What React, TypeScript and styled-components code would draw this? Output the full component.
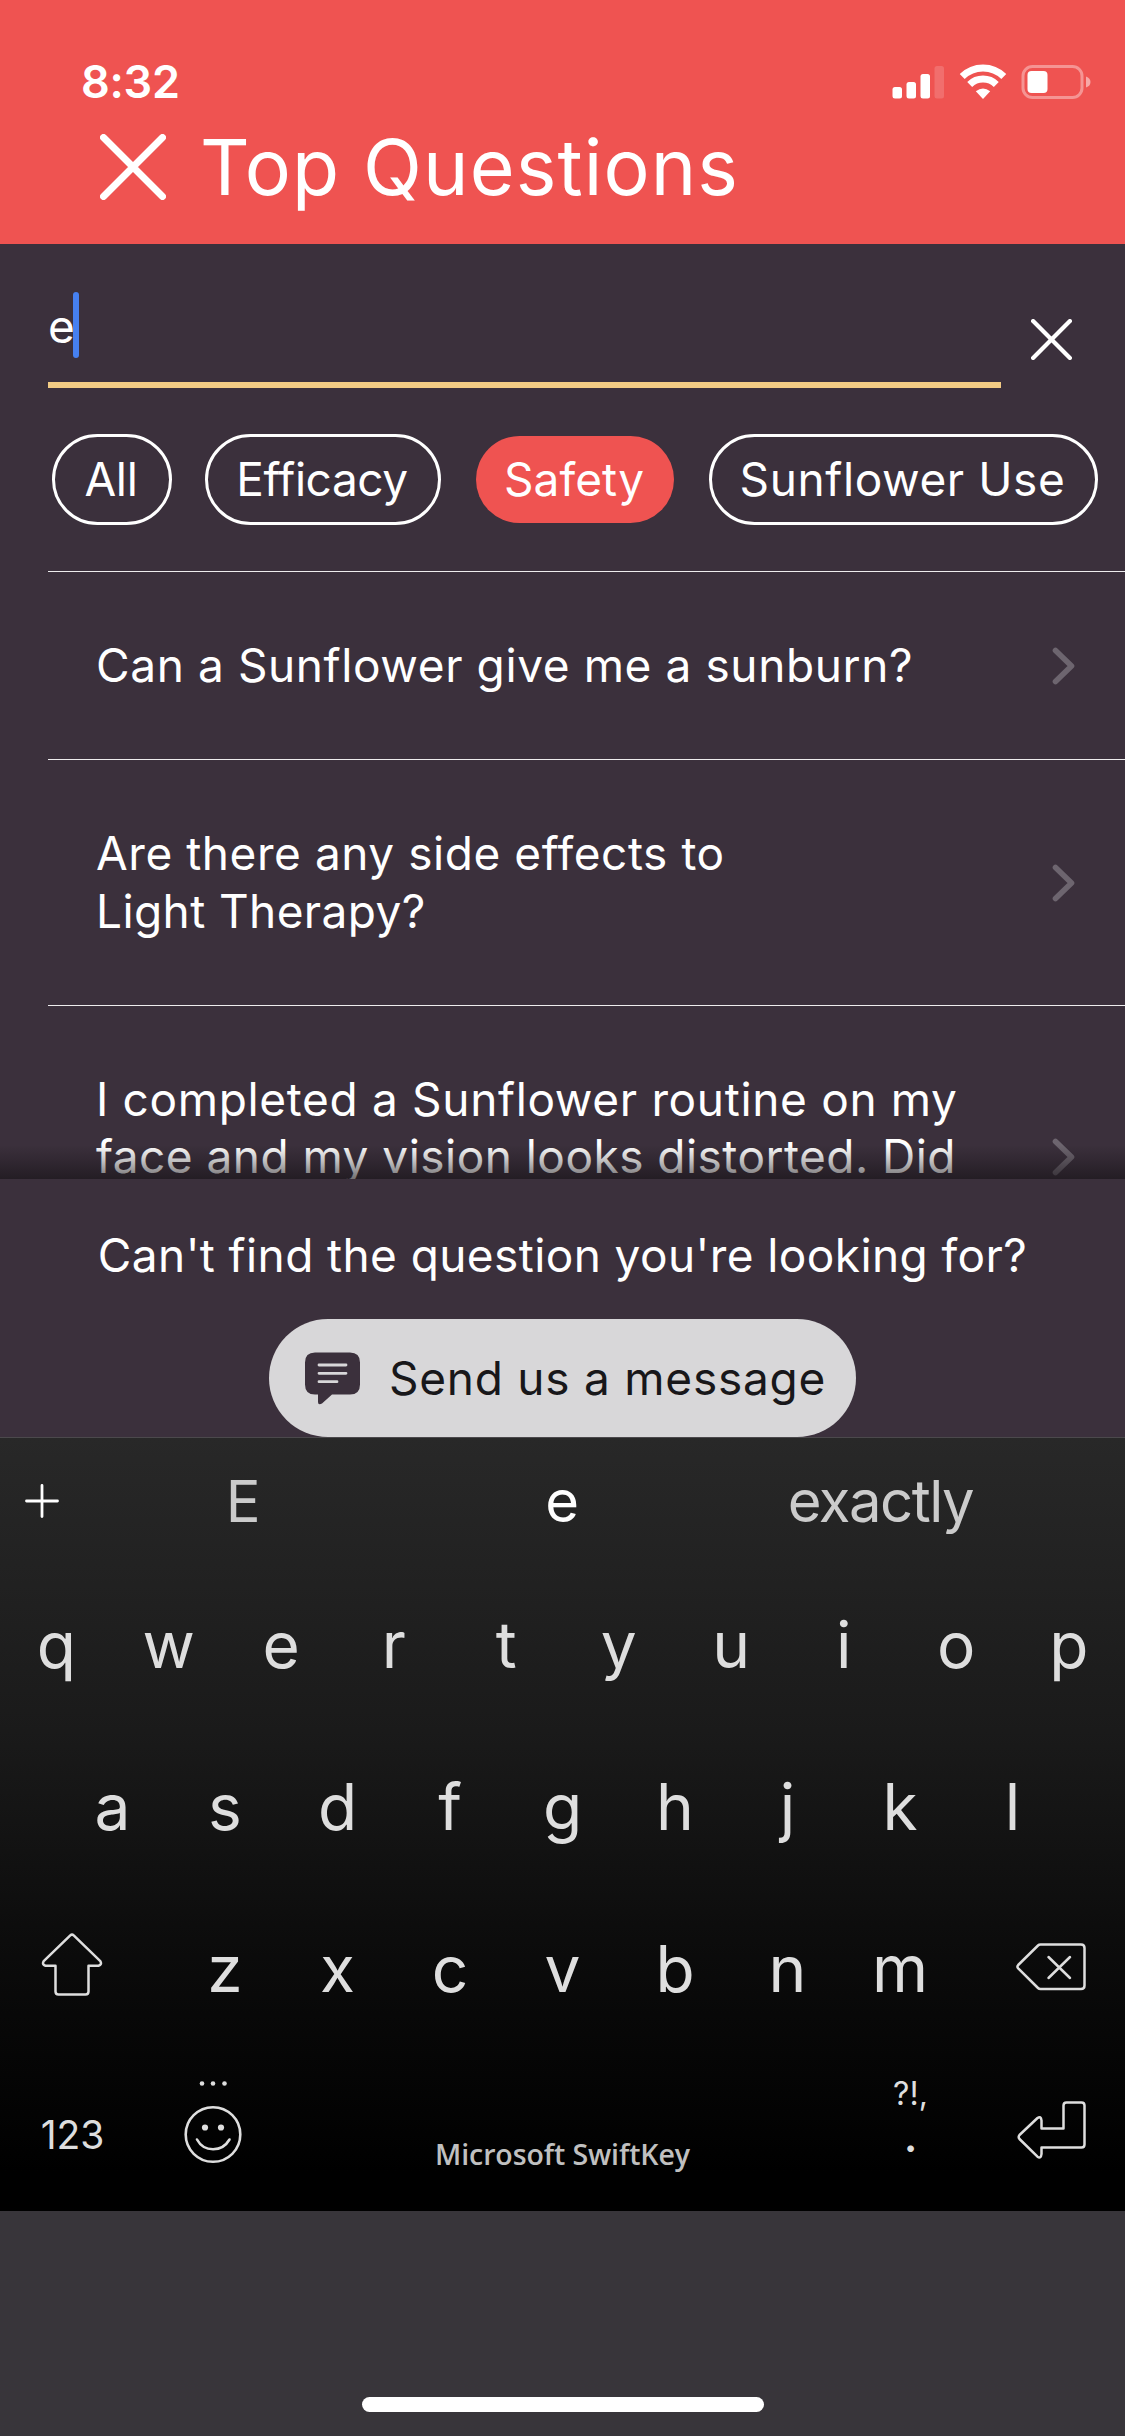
import React from 'react';
import styled, { createGlobalStyle } from 'styled-components';

const GlobalStyle = createGlobalStyle`
  * { box-sizing: border-box; }
  body { margin: 0; background: #38353a; }
  svg { display: block; flex: none; }
`;

const labelFont = `"Open Sans", "Noto Sans", sans-serif`;
const systemFont = `Inter, "Liberation Sans", sans-serif`;

const Screen = styled.div`
  width: 1125px;
  height: 2436px;
  display: flex;
  flex-direction: column;
  overflow: hidden;
  background: #3b303c;
  color: #fff;
  font-family: ${systemFont};
`;

const Header = styled.header`
  height: 244px;
  flex: none;
  background: #ef5351;
`;

const StatusBar = styled.div`
  display: flex;
  align-items: center;
  justify-content: space-between;
  padding: 52px 34px 0 81px;
`;

const Clock = styled.span`
  font: 600 45px/60px ${systemFont};
  letter-spacing: -0.3px;
`;

const StatusIcons = styled.div`
  display: flex;
  align-items: center;
`;

const TitleRow = styled.div`
  display: flex;
  align-items: center;
  gap: 34px;
  padding: 10px 0 0 100px;
`;

const Title = styled.h1`
  margin: 0;
  font-size: 77px;
  font-weight: 400;
  line-height: 90px;
  letter-spacing: 1.1px;
`;

const SearchRow = styled.div`
  display: flex;
  flex: none;
  align-items: flex-start;
  gap: 30px;
  padding: 48px 0 0 48px;
`;

const SearchField = styled.div`
  display: flex;
  width: 953px;
  height: 96px;
  border-bottom: 6px solid #f2cb84;
  font-size: 46px;
  line-height: 66px;
`;

const SearchValue = styled.span`
  padding-top: 1px;
`;

const Caret = styled.span`
  width: 6px;
  height: 66px;
  margin-left: -2px;
  border-radius: 3px;
  background: #4680f0;
`;

const ClearButton = styled.div`
  padding-top: 27px;
`;

const Chips = styled.div`
  display: flex;
  flex: none;
  gap: 33px;
  padding: 46px 0 46px 52px;
`;

const Chip = styled.div<{ $width: number; $track: number; $active?: boolean }>`
  flex: none;
  width: ${(p) => p.$width}px;
  height: 91px;
  padding: 0 2px 2px 0;
  border: ${(p) => (p.$active ? '2px solid transparent' : '3px solid #fff')};
  border-radius: 46px;
  background: ${(p) => (p.$active ? '#ef5351' : 'transparent')};
  background-clip: padding-box;
  display: flex;
  align-items: center;
  justify-content: center;
  font-size: 46px;
  line-height: 84px;
  letter-spacing: ${(p) => p.$track}px;
  white-space: nowrap;
`;

const Questions = styled.div`
  position: relative;
  height: 608px;
  flex: none;
  overflow: hidden;
  padding-left: 48px;

  &::after {
    content: '';
    position: absolute;
    inset: auto 0 0 0;
    height: 34px;
    background: linear-gradient(rgba(20, 16, 20, 0), rgba(20, 16, 20, 0.25) 45%, rgba(20, 16, 20, 0.6));
  }
`;

const Question = styled.div<{ $tall?: boolean }>`
  display: flex;
  align-items: center;
  justify-content: space-between;
  ${(p) => p.$tall && 'height: 303px;'}
  padding: 0 50px 0 48px;
  border-top: 1px solid #eeecee;
`;

const QuestionText = styled.div`
  align-self: flex-start;
  padding: 65px 0;
  font-size: 46px;
  line-height: 57.25px;
`;

const Line = styled.span<{ $track: number }>`
  display: block;
  white-space: nowrap;
  letter-spacing: ${(p) => p.$track}px;
`;

const Contact = styled.section`
  height: 258px;
  flex: none;
  display: flex;
  flex-direction: column;
  align-items: center;
  gap: 34px;
  padding-top: 46px;
  font-size: 46px;
  line-height: 60px;
`;

const MessageButton = styled.div`
  display: flex;
  align-items: center;
  gap: 28px;
  width: 587px;
  height: 118px;
  padding-left: 36px;
  border-radius: 59px;
  background: #d8d7d9;
  color: #18171a;
`;

const Keyboard = styled.section`
  height: 774px;
  flex: none;
  border-top: 1px solid #4b494c;
  background: linear-gradient(#282828, #1a1a1a 38%, #0b0b0b 67%, #000 95%);
  color: #dedede;
`;

const Suggestions = styled.div`
  display: flex;
  align-items: center;
  height: 125px;
  padding-right: 85px;
`;

const AddButton = styled.div`
  display: flex;
  justify-content: center;
  width: 83px;
`;

const Suggestion = styled.div<{ $main?: boolean }>`
  flex: 1;
  text-align: center;
  font-size: 58px;
  letter-spacing: -1.5px;
  color: ${(p) => (p.$main ? '#fff' : '#cbcbcb')};
`;

const KeyRow = styled.div<{ $inset?: number }>`
  display: flex;
  height: 162px;
  padding: 0 ${(p) => p.$inset ?? 0}px;
`;

const Key = styled.div`
  display: flex;
  align-items: center;
  justify-content: center;
  width: 112.5px;
  font-size: 64px;
`;

const ShiftKey = styled(Key)`
  width: 168.75px;
  padding: 0 25px 6px 0;
`;

const DeleteKey = styled(Key)`
  width: 168.75px;
  padding: 0 0 2px 21px;
`;

const BottomRow = styled.div`
  display: grid;
  grid-template-columns: 145px 135px 565px 131px 149px;
  height: 162px;
`;

const NumbersKey = styled(Key)`
  width: auto;
  padding-top: 8px;
  font-size: 39px;
`;

const EmojiKey = styled(Key)`
  width: auto;
  padding-bottom: 16px;
`;

const SpaceKey = styled(Key)`
  width: auto;
  padding-top: 48px;
  font: 600 28.5px/40px ${labelFont};
  letter-spacing: -0.1px;
  color: #c0c0c0;
`;

const PunctuationKey = styled.div`
  display: flex;
  flex-direction: column;
  align-items: center;
  gap: 5px;
  padding-top: 25px;
  line-height: 40px;
`;

const AltMarks = styled.span`
  font-size: 32px;
`;

const Period = styled.span`
  font-size: 36px;
  font-weight: 800;
`;

const EnterKey = styled(Key)`
  width: auto;
  padding-left: 2px;
`;

const HomeArea = styled.footer`
  flex: 1;
  display: flex;
  align-items: flex-end;
  justify-content: center;
  padding-bottom: 24px;
  background: #38353a;
`;

const HomeIndicator = styled.div`
  width: 402px;
  height: 15px;
  border-radius: 8px;
  background: #fff;
`;

const Cross = ({ size, stroke }: { size: number; stroke: number }) => {
  const near = stroke / 2;
  const far = size - near;
  return (
    <svg width={size} height={size} viewBox={`0 0 ${size} ${size}`} fill="none" stroke="#fff" strokeWidth={stroke} strokeLinecap="round">
      <path d={`M${near} ${near}L${far} ${far}M${far} ${near}L${near} ${far}`} />
    </svg>
  );
};

const Chevron = () => (
  <svg width="23" height="38" viewBox="0 0 23 38" fill="none" stroke="#6d656f" strokeWidth="5.6" strokeLinecap="round" strokeLinejoin="round">
    <path d="M3.500 3.500L19.500 19L3.500 34.500" />
  </svg>
);

const StatusGlyphs = () => (
  <svg width="199" height="36" viewBox="0 0 199 36" fill="#fff">
    <rect x="0.500" y="23" width="9.500" height="11.500" rx="2.500" />
    <rect x="14.500" y="18" width="9.500" height="16.500" rx="2.500" />
    <rect x="28.500" y="10" width="9.500" height="24.500" rx="2.500" />
    <rect x="42.500" y="2" width="9.500" height="32.500" rx="2.500" opacity="0.16" />
    <g fill="none" stroke="#fff">
      <path d="M70.200 12.600a29.500 29.500 0 0 1 41.600 0" strokeWidth="7" />
      <path d="M77.700 20.400a19 19 0 0 1 26.600 0" strokeWidth="7" />
    </g>
    <path d="M83.800 27.200q7.200-5.600 14.400 0L91 35z" />
    <rect x="131" y="2.500" width="59" height="31" rx="9.500" fill="none" stroke="#fff" strokeOpacity="0.38" strokeWidth="3" />
    <rect x="135.500" y="7" width="20" height="22" rx="4" />
    <path d="M194 12.500q4.500 1.500 4.500 5.500t-4.500 5.500z" opacity="0.5" />
  </svg>
);

const MessageIcon = () => (
  <svg width="56" height="53" viewBox="0 0 56 53" fill="#3b303c">
    <path d="M10 0.500H45Q55 0.500 55 10.500V32.500Q55 42.500 45 42.500H27L17 51.500Q13 53.500 13 50V42.500H10Q0 42.500 0 32.500V10.500Q0 0.500 10 0.500Z" />
    <path d="M14 13H41M14 21.300H41M14 29.700H32" stroke="#d8d7d9" strokeWidth="2.800" strokeLinecap="round" />
  </svg>
);

const PlusIcon = () => (
  <svg width="34" height="34" viewBox="0 0 34 34" stroke="#fff" strokeWidth="2.800" strokeLinecap="round">
    <path d="M17 1.500V32.500M1.500 17H32.500" />
  </svg>
);

const outline = { fill: 'none', stroke: '#dedede', strokeWidth: 2.5, strokeLinejoin: 'round', strokeLinecap: 'round' } as const;

const ShiftIcon = () => (
  <svg width="62" height="64" viewBox="0 0 62 64" {...outline}>
    <path d="M29.300 2.400Q31 0.800 32.700 2.400L59.300 28.200Q61.300 31.500 57.500 32.700H47.500V58.500Q47.500 61.500 44.500 61.500H17.500Q14.500 61.500 14.500 58.500V32.700H4.500Q0.700 31.500 2.700 28.200Z" />
  </svg>
);

const DeleteIcon = () => (
  <svg width="70" height="48" viewBox="0 0 70 48" {...outline}>
    <path d="M24.500 1.500H65Q68.500 1.500 68.500 5V42.500Q68.500 46 65 46H24.500Q23 46 22 45L2.200 25.400Q0.700 23.700 2.200 22L22 2.500Q23 1.500 24.500 1.500Z" />
    <path d="M32.500 14L54 35M54 14L32.500 35" />
  </svg>
);

const EmojiIcon = () => (
  <svg width="58" height="84" viewBox="0 0 58 84" fill="#dedede">
    <circle cx="18" cy="3.500" r="2.300" />
    <circle cx="29" cy="3.500" r="2.300" />
    <circle cx="40.500" cy="3.500" r="2.300" />
    <circle cx="29" cy="54.500" r="27.300" fill="none" stroke="#dedede" strokeWidth="2.600" />
    <circle cx="21" cy="47.500" r="3.100" />
    <circle cx="37" cy="47.500" r="3.100" />
    <path d="M13 59.500C20 72.500 38 72.500 45.500 59.500" fill="none" stroke="#dedede" strokeWidth="2.600" strokeLinecap="round" />
  </svg>
);

const EnterIcon = () => (
  <svg width="70" height="59" viewBox="0 0 70 59" {...outline}>
    <path d="M49.500 1.500H64.500Q67.500 1.500 67.500 4.500V43.500Q67.500 46.500 64.500 46.500H24.500V53Q24 58 20.500 55.700L2.500 38Q0.900 36 2.500 34L20.500 17Q24 14.500 24.500 19.500V27.500H46.500V4.500Q46.500 1.500 49.500 1.500Z" />
  </svg>
);

const chips = [
  { label: 'All', width: 120, track: -0.3 },
  { label: 'Efficacy', width: 236, track: -0.4 },
  { label: 'Safety', width: 202, track: 0.1 },
  { label: 'Sunflower Use', width: 389, track: 0.6 },
];

const activeChip = 'Safety';

const questions = [
  { lines: [{ text: 'Can a Sunflower give me a sunburn?', track: 0.6 }] },
  {
    lines: [
      { text: 'Are there any side effects to', track: 0.55 },
      { text: 'Light Therapy?', track: 0.4 },
    ],
  },
  {
    tall: true,
    lines: [
      { text: 'I completed a Sunflower routine on my', track: 0.66 },
      { text: 'face and my vision looks distorted. Did', track: 0.47 },
    ],
  },
];

export default function App() {
  return (
    <>
      <GlobalStyle />
      <Screen>
        <Header>
          <StatusBar>
            <Clock>8:32</Clock>
            <StatusIcons>
              <StatusGlyphs />
            </StatusIcons>
          </StatusBar>
          <TitleRow>
            <Cross size={66} stroke={7} />
            <Title>Top Questions</Title>
          </TitleRow>
        </Header>

        <SearchRow>
          <SearchField>
            <SearchValue>e</SearchValue>
            <Caret />
          </SearchField>
          <ClearButton>
            <Cross size={41} stroke={4.2} />
          </ClearButton>
        </SearchRow>

        <Chips>
          {chips.map((c) => (
            <Chip key={c.label} $width={c.width} $track={c.track} $active={c.label === activeChip}>
              {c.label}
            </Chip>
          ))}
        </Chips>

        <Questions>
          {questions.map((q) => (
            <Question key={q.lines[0].text} $tall={q.tall}>
              <QuestionText>
                {q.lines.map((l) => (
                  <Line key={l.text} $track={l.track}>
                    {l.text}
                  </Line>
                ))}
              </QuestionText>
              <Chevron />
            </Question>
          ))}
        </Questions>

        <Contact>
          <Line $track={0.4}>Can't find the question you're looking for?</Line>
          <MessageButton>
            <MessageIcon />
            <Line $track={0.75}>Send us a message</Line>
          </MessageButton>
        </Contact>

        <Keyboard>
          <Suggestions>
            <AddButton>
              <PlusIcon />
            </AddButton>
            <Suggestion>E</Suggestion>
            <Suggestion $main>e</Suggestion>
            <Suggestion>exactly</Suggestion>
          </Suggestions>
          <KeyRow>
            {[...'qwertyuiop'].map((k) => (
              <Key key={k}>{k}</Key>
            ))}
          </KeyRow>
          <KeyRow $inset={56.25}>
            {[...'asdfghjkl'].map((k) => (
              <Key key={k}>{k}</Key>
            ))}
          </KeyRow>
          <KeyRow>
            <ShiftKey>
              <ShiftIcon />
            </ShiftKey>
            {[...'zxcvbnm'].map((k) => (
              <Key key={k}>{k}</Key>
            ))}
            <DeleteKey>
              <DeleteIcon />
            </DeleteKey>
          </KeyRow>
          <BottomRow>
            <NumbersKey>123</NumbersKey>
            <EmojiKey>
              <EmojiIcon />
            </EmojiKey>
            <SpaceKey>Microsoft SwiftKey</SpaceKey>
            <PunctuationKey>
              <AltMarks>?!,</AltMarks>
              <Period>.</Period>
            </PunctuationKey>
            <EnterKey>
              <EnterIcon />
            </EnterKey>
          </BottomRow>
        </Keyboard>

        <HomeArea>
          <HomeIndicator />
        </HomeArea>
      </Screen>
    </>
  );
}
